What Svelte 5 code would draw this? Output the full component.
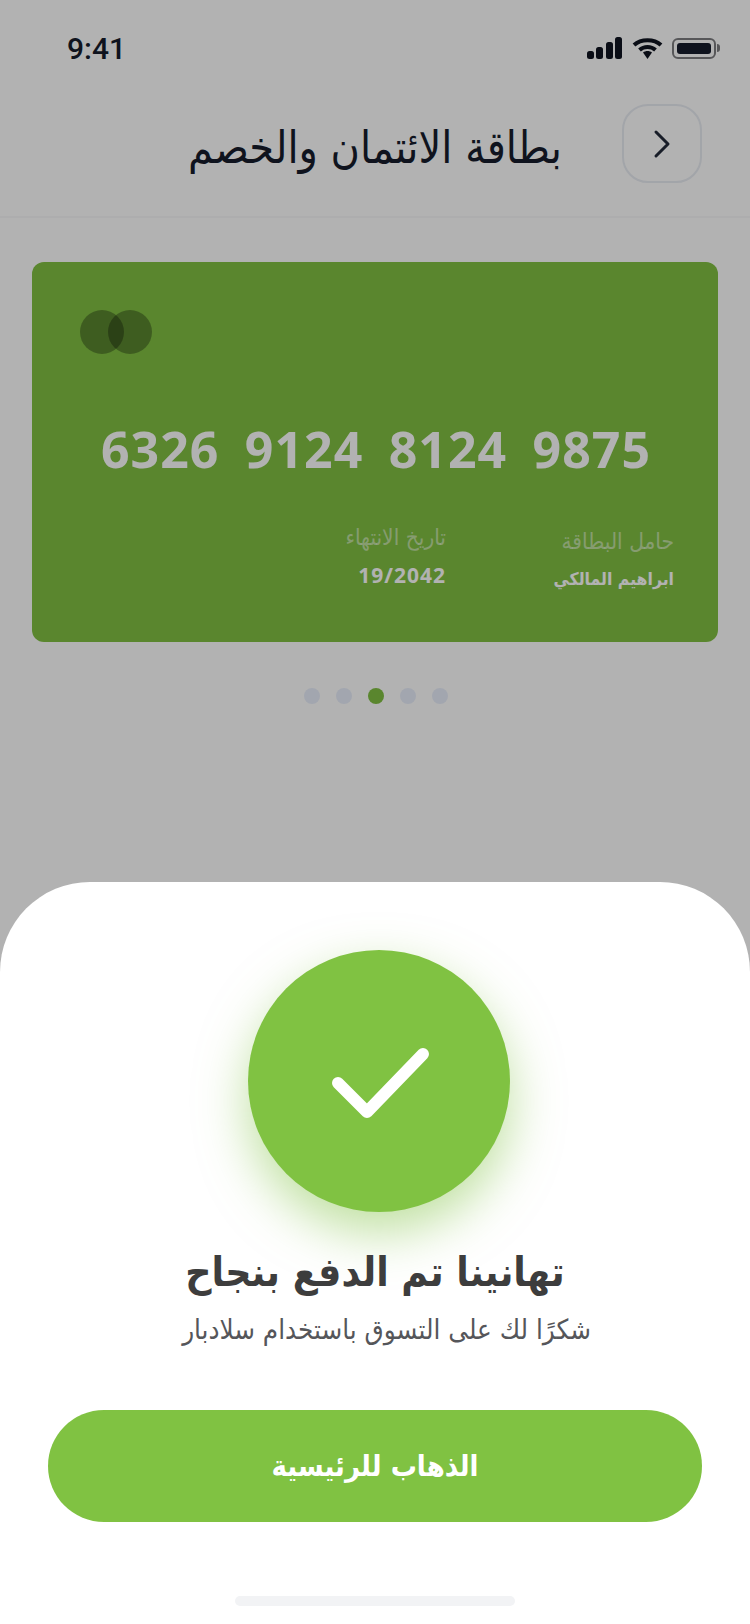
<script>
  const dots = [0, 1, 2, 3, 4];
  const activeDot = 2;
  const groups = ['6326', '9124', '8124', '9875'];
</script>

<div class="screen">
  <div class="status">
    <span class="time">9:41</span>
    <div class="status-icons">
      <svg width="36" height="22" viewBox="0 0 36 22" fill="#0f1420">
        <rect x="0" y="14" width="7" height="8" rx="2.500" />
        <rect x="9" y="10" width="7" height="12" rx="2.500" />
        <rect x="19" y="5" width="7" height="17" rx="2.500" />
        <rect x="28" y="0" width="7" height="22" rx="2.500" />
      </svg>
      <svg width="31" height="22" viewBox="0 0 31 22" fill="none" stroke="#0f1420" stroke-width="4">
        <path d="M2 8 C9 1.500 22 1.500 29 8" />
        <path d="M7.500 13 C12 9 19 9 23.500 13" />
        <path d="M11 15.500 L15.500 22 L20 15.500 C17.500 13.500 13.500 13.500 11 15.500Z" fill="#0f1420" stroke="none" />
      </svg>
      <div class="battery"><div class="battery-fill"></div></div>
    </div>
  </div>

  <header class="topbar">
    <div class="back">
      <svg width="18" height="30" viewBox="0 0 18 30" fill="none" stroke="#232a3a" stroke-width="3" stroke-linecap="round" stroke-linejoin="round">
        <path d="M3 3 L15 15 L3 27" />
      </svg>
    </div>
    <h1>بطاقة الائتمان والخصم</h1>
  </header>

  <div class="card">
    <div class="logo">
      <span class="disc"></span>
      <span class="disc second"></span>
    </div>
    <div class="number">
      {#each groups as group}
        <span>{group}</span>
      {/each}
    </div>
    <div class="details">
      <div class="holder">
        <span class="label">حامل البطاقة</span>
        <span class="value">ابراهيم المالكي</span>
      </div>
      <div class="expiry">
        <span class="label">تاريخ الانتهاء</span>
        <span class="value latin">19/2042</span>
      </div>
    </div>
  </div>

  <div class="dots">
    {#each dots as dot}
      <span class="dot" class:active={dot === activeDot}></span>
    {/each}
  </div>

  <div class="scrim"></div>

  <section class="sheet">
    <div class="success">
      <svg class="check" width="97" height="70" viewBox="0 0 97 70" fill="none" stroke="#fff" stroke-width="12" stroke-linecap="round" stroke-linejoin="round">
        <path d="M6 35 L35 64 L91 6" />
      </svg>
    </div>
    <h2>تهانينا تم الدفع بنجاح</h2>
    <p>شكرًا لك على التسوق باستخدام سلادبار</p>
    <button class="primary">الذهاب للرئيسية</button>
    <div class="home-bar"></div>
  </section>
</div>

<style>
  :global(body) {
    margin: 0;
    background: #fff;
  }

  .screen {
    position: relative;
    width: 750px;
    height: 1624px;
    overflow: hidden;
    background: #fff;
    font-family: "DejaVu Sans Condensed", "DejaVu Sans", sans-serif;
    font-stretch: condensed;
  }

  .status {
    display: flex;
    justify-content: space-between;
    align-items: center;
    height: 96px;
    padding: 0 34px 0 67px;
    box-sizing: border-box;
  }

  .time {
    font-family: Roboto, sans-serif;
    font-stretch: normal;
    font-size: 30px;
    font-weight: 500;
    color: #161c2c;
  }

  .status-icons {
    display: flex;
    align-items: center;
    gap: 9px;
  }

  .battery {
    position: relative;
    width: 44px;
    height: 21px;
    padding: 3px;
    box-sizing: border-box;
    border: 2px solid #7d7d80;
    border-radius: 6px;
  }

  .battery::after {
    content: "";
    position: absolute;
    right: -6px;
    top: 4px;
    width: 3px;
    height: 8px;
    background: #7d7d80;
    border-radius: 0 3px 3px 0;
  }

  .battery-fill {
    width: 100%;
    height: 100%;
    background: #161c2c;
    border-radius: 3px;
  }

  .topbar {
    display: flex;
    flex-direction: row-reverse;
    align-items: center;
    height: 122px;
    padding: 0 48px 25px;
    box-sizing: border-box;
    border-bottom: 2px solid #f8f8f9;
  }

  .back {
    display: flex;
    align-items: center;
    justify-content: center;
    width: 80px;
    height: 79px;
    margin-left: 60px;
    box-sizing: border-box;
    border: 2px solid #e9ecf3;
    border-radius: 26px;
  }

  h1 {
    margin: 8px 0 0;
    font-size: 44.5px;
    font-weight: 400;
    color: #161c2c;
    direction: rtl;
  }

  .card {
    display: flex;
    flex-direction: column;
    width: 686px;
    height: 380px;
    margin: 44px 0 0 32px;
    padding: 48px 44px 0 48px;
    box-sizing: border-box;
    background: #81c143;
    border-radius: 12px;
  }

  .logo {
    display: flex;
  }

  .disc {
    width: 44px;
    height: 44px;
    border-radius: 50%;
    background: rgba(0, 0, 0, 0.3);
  }

  .disc.second {
    margin-left: -16px;
  }

  .number {
    display: flex;
    justify-content: space-between;
    margin: 64px 23px 0 21px;
    font-family: "Noto Sans", sans-serif;
    font-stretch: normal;
    font-size: 50px;
    font-weight: 700;
    letter-spacing: 1px;
    color: #fff;
    line-height: 62px;
  }

  .details {
    display: flex;
    gap: 109px;
    margin-top: 45px;
    direction: rtl;
  }

  .holder,
  .expiry {
    display: flex;
    flex-direction: column;
    gap: 14px;
  }

  .holder {
    width: 119px;
    padding-top: 4px;
  }

  .label {
    font-size: 22.5px;
    white-space: nowrap;
    line-height: 24px;
    color: rgba(255, 255, 255, 0.5);
  }

  .value {
    font-size: 21px;
    line-height: 24px;
    font-weight: 700;
    color: #fff;
  }

  .holder .value {
    font-size: 17.5px;
    white-space: nowrap;
  }

  .value.latin {
    font-family: "Noto Sans", sans-serif;
    font-stretch: normal;
    letter-spacing: 1px;
  }

  .dots {
    display: flex;
    justify-content: center;
    gap: 16px;
    margin-top: 46px;
    padding-left: 2px;
  }

  .dot {
    width: 16px;
    height: 16px;
    border-radius: 50%;
    background: #e9eefb;
  }

  .dot.active {
    background: #81c143;
  }

  .scrim {
    position: absolute;
    inset: 0;
    background: rgba(0, 0, 0, 0.3);
  }

  .sheet {
    position: absolute;
    left: 0;
    right: 0;
    bottom: 0;
    display: flex;
    flex-direction: column;
    align-items: center;
    height: 742px;
    padding-top: 68px;
    box-sizing: border-box;
    background: #fff;
    border-radius: 90px 90px 0 0;
    direction: rtl;
  }

  .success {
    display: flex;
    align-items: center;
    justify-content: center;
    width: 262px;
    height: 262px;
    margin-left: 8px;
    background: #80c242;
    border-radius: 50%;
    box-shadow: 0 20px 50px rgba(128, 194, 66, 0.5);
  }

  .check {
    margin: 4px 0 0 3px;
  }

  h2 {
    margin: 30px 0 0;
    font-size: 40.5px;
    font-weight: 700;
    line-height: 60px;
    color: #3d3d3d;
  }

  p {
    margin: 7px 0 0 23px;
    font-size: 27.5px;
    line-height: 40px;
    color: #55565a;
  }

  .primary {
    width: 654px;
    height: 112px;
    margin-top: 61px;
    border: none;
    border-radius: 56px;
    background: #80c242;
    color: #fff;
    font-family: inherit;
    font-stretch: inherit;
    font-size: 29px;
    font-weight: 700;
  }

  .home-bar {
    width: 280px;
    height: 10px;
    margin-top: 74px;
    background: #f2f3f5;
    border-radius: 5px;
  }
</style>
